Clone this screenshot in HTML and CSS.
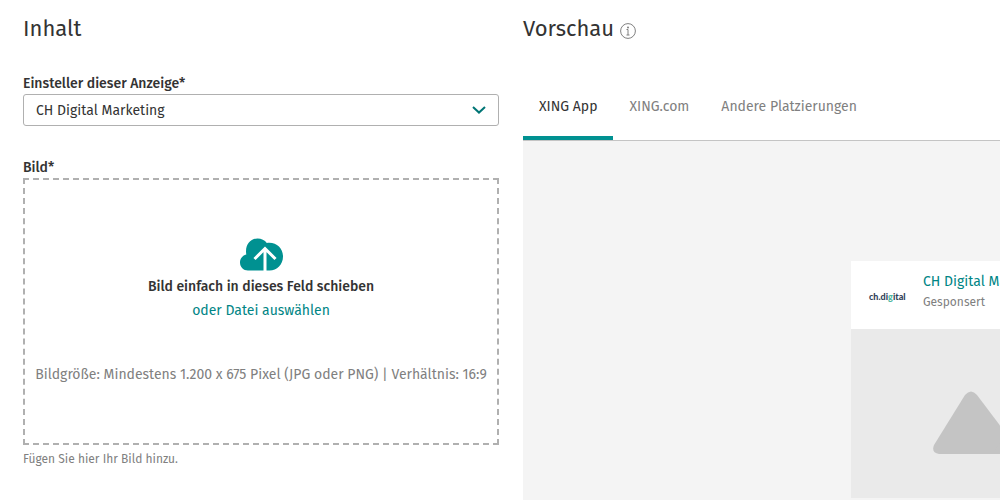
FILE: index.html
```html
<!DOCTYPE html>
<html lang="de">
    <head>
        <meta charset="UTF-8">
        <meta name="viewport" content="width=device-width, initial-scale=1.0">

        <title>Anzeige erstellen</title>
        <link rel="stylesheet" href="styles.css">
    </head>
    <body>
        <main class="editor">
            <form class="content">
                <h2>Inhalt</h2>

                <label class="field-label" for="sender">Einsteller dieser Anzeige*</label>
                <div class="select-box">
                    <select id="sender" name="sender">
                        <option>CH Digital Marketing</option>
                    </select>
                    <svg class="chevron" viewBox="0 0 14 8" aria-hidden="true">
                        <path d="M1 1l6 5.6L13 1"/>
                    </svg>
                </div>

                <label class="field-label" for="choose">Bild*</label>
                <div class="dropzone">
                    <svg class="cloud" viewBox="-1 0 44 33" aria-hidden="true">
                        <path class="cloud-shape" d="M8 32.500C3.500 32.500 0 29 0 24.500c0-4 2.500-7 6.300-8C4.800 8 9.500 0.500 17.500 0.500c4 0 7.200 1.700 9.300 4.400C36 3.500 43 10 43 18.500c0 8-6 14-13.500 14z"/>
                        <path class="cloud-arrow" d="M25 33V11M14.500 21l10.500-10.500L35.500 21"/>
                    </svg>
                    <p class="drop-title">Bild einfach in dieses Feld schieben</p>
                    <button type="button" id="choose" class="choose">oder Datei auswählen</button>
                    <p class="drop-info">Bildgröße: Mindestens 1.200 x 675 Pixel (JPG oder PNG) | Verhältnis: 16:9</p>
                </div>
                <p class="hint">Fügen Sie hier Ihr Bild hinzu.</p>
            </form>

            <section class="preview">
                <h2>
                    Vorschau
                    <svg class="info" viewBox="0 0 16 16" aria-hidden="true">
                        <circle cx="8" cy="8" r="7.400"/>
                        <path d="M6.500 6.500H8V12M6.500 12h3"/>
                        <circle class="info-dot" cx="8" cy="4.500" r="1"/>
                    </svg>
                </h2>

                <nav class="tabs">
                    <button type="button" class="tab active">XING App</button>
                    <button type="button" class="tab">XING.com</button>
                    <button type="button" class="tab">Andere Platzierungen</button>
                </nav>

                <div class="stage">
                    <article class="card">
                        <header class="card-header">
                            <div class="logo">ch.di<span>g</span>ital</div>
                            <div class="card-sender">
                                <a href="#">CH Digital Marketing</a>
                                <p>Gesponsert</p>
                            </div>
                        </header>
                        <div class="card-image">
                            <svg viewBox="0 0 136 64" aria-hidden="true">
                                <path d="M32 4Q38-3 44 4L84 57Q86 63 80 63H6Q-2 62 1 54z"/>
                                <path d="M84 24q5-6 10 0l40 31q4 8-4 8H60z"/>
                            </svg>
                        </div>
                    </article>
                </div>
            </section>
        </main>
    </body>
</html>
```

FILE: styles.css
```css
* {
    box-sizing: border-box;
}

body {
    font-family: "Fira Sans", "Noto Sans", sans-serif;
    font-size: 14px;
    line-height: 24px;
    color: #333;
    background-color: #fff;
    margin: 0;
}

h2, p {
    margin: 0;
}

h2 {
    font-size: 22px;
    font-weight: 400;
    line-height: 32px;
}

button, select {
    font: inherit;
    color: inherit;
    cursor: pointer;
}

button {
    background: none;
    border: none;
    padding: 0;
}

svg {
    display: block;
    flex: none;
}

.editor {
    display: grid;
    grid-template-columns: minmax(0, 476fr) minmax(0, 477fr);
    gap: 24px;
    min-height: 100vh;
    padding-left: 23px;
    overflow: hidden;
}

/* left column */
.content {
    padding-top: 13px;
}

.content h2 {
    margin-bottom: 28px;
}

.field-label {
    display: block;
    padding-top: 1px;
    font-weight: 500;
    line-height: 20px;
}

.select-box {
    display: grid;
    align-items: center;
    margin-bottom: 31px;
}

.select-box select, .chevron {
    grid-area: 1 / 1;
}

.select-box select {
    appearance: none;
    width: 100%;
    height: 32px;
    padding: 2px 40px 0 12px;
    background-color: #fff;
    border: 1px solid #b0b0b0;
    border-radius: 3px;
}

.chevron {
    justify-self: end;
    width: 14px;
    margin-right: 13px;
    fill: none;
    stroke: #007575;
    stroke-width: 2;
    pointer-events: none;
}

.dropzone {
    display: flex;
    flex-direction: column;
    align-items: center;
    padding: 58px 8px 56px;
    border: 2px dashed #b0b0b0;
    text-align: center;
}

.cloud {
    width: 44px;
    height: 33px;
    margin-bottom: 4px;
}

.cloud-shape {
    fill: #009191;
}

.cloud-arrow {
    fill: none;
    stroke: #fff;
    stroke-width: 3;
}

.drop-title {
    font-weight: 500;
}

.choose {
    color: #008585;
}

.drop-info {
    margin-top: 40px;
    color: #808080;
}

.hint {
    padding-top: 2px;
    font-size: 12px;
    color: #808080;
}

/* right column */
.preview {
    display: flex;
    flex-direction: column;
    padding-top: 13px;
}

.preview h2 {
    display: flex;
    align-items: center;
    gap: 6px;
}

.info {
    width: 16px;
    margin-top: 4px;
    fill: none;
    stroke: #808080;
}

.info-dot {
    fill: #808080;
    stroke: none;
}

.tabs {
    display: flex;
    margin-top: 27px;
    border-bottom: 1px solid #c4c4c4;
}

.tab {
    height: 68px;
    padding: 6px 16px 0;
    border-bottom: 4px solid transparent;
    color: #808080;
}

.tab.active {
    border-bottom-color: #009191;
    color: #333;
}

.stage {
    flex: 1;
    padding: 120px 0 0 328px;
    background-color: #f4f4f4;
}

.card {
    width: 300px;
    background-color: #fff;
}

.card-header {
    display: flex;
    align-items: center;
    gap: 18px;
    height: 68px;
    padding: 0 18px;
}

.logo {
    width: 36px;
    padding-top: 4px;
    font-family: Lato, sans-serif;
    font-size: 9px;
    font-weight: 900;
    color: #32425a;
}

.logo span {
    color: #4db8a0;
}

.card-sender {
    padding-bottom: 6px;
    line-height: 20px;
    white-space: nowrap;
}

.card-sender a {
    color: #008585;
    text-decoration: none;
}

.card-sender p {
    font-size: 12px;
    color: #808080;
}

.card-image {
    display: flex;
    align-items: center;
    justify-content: center;
    height: 169px;
    padding-top: 19px;
    background-color: #eaeaea;
}

.card-image svg {
    width: 136px;
    fill: #c4c4c4;
}
```
